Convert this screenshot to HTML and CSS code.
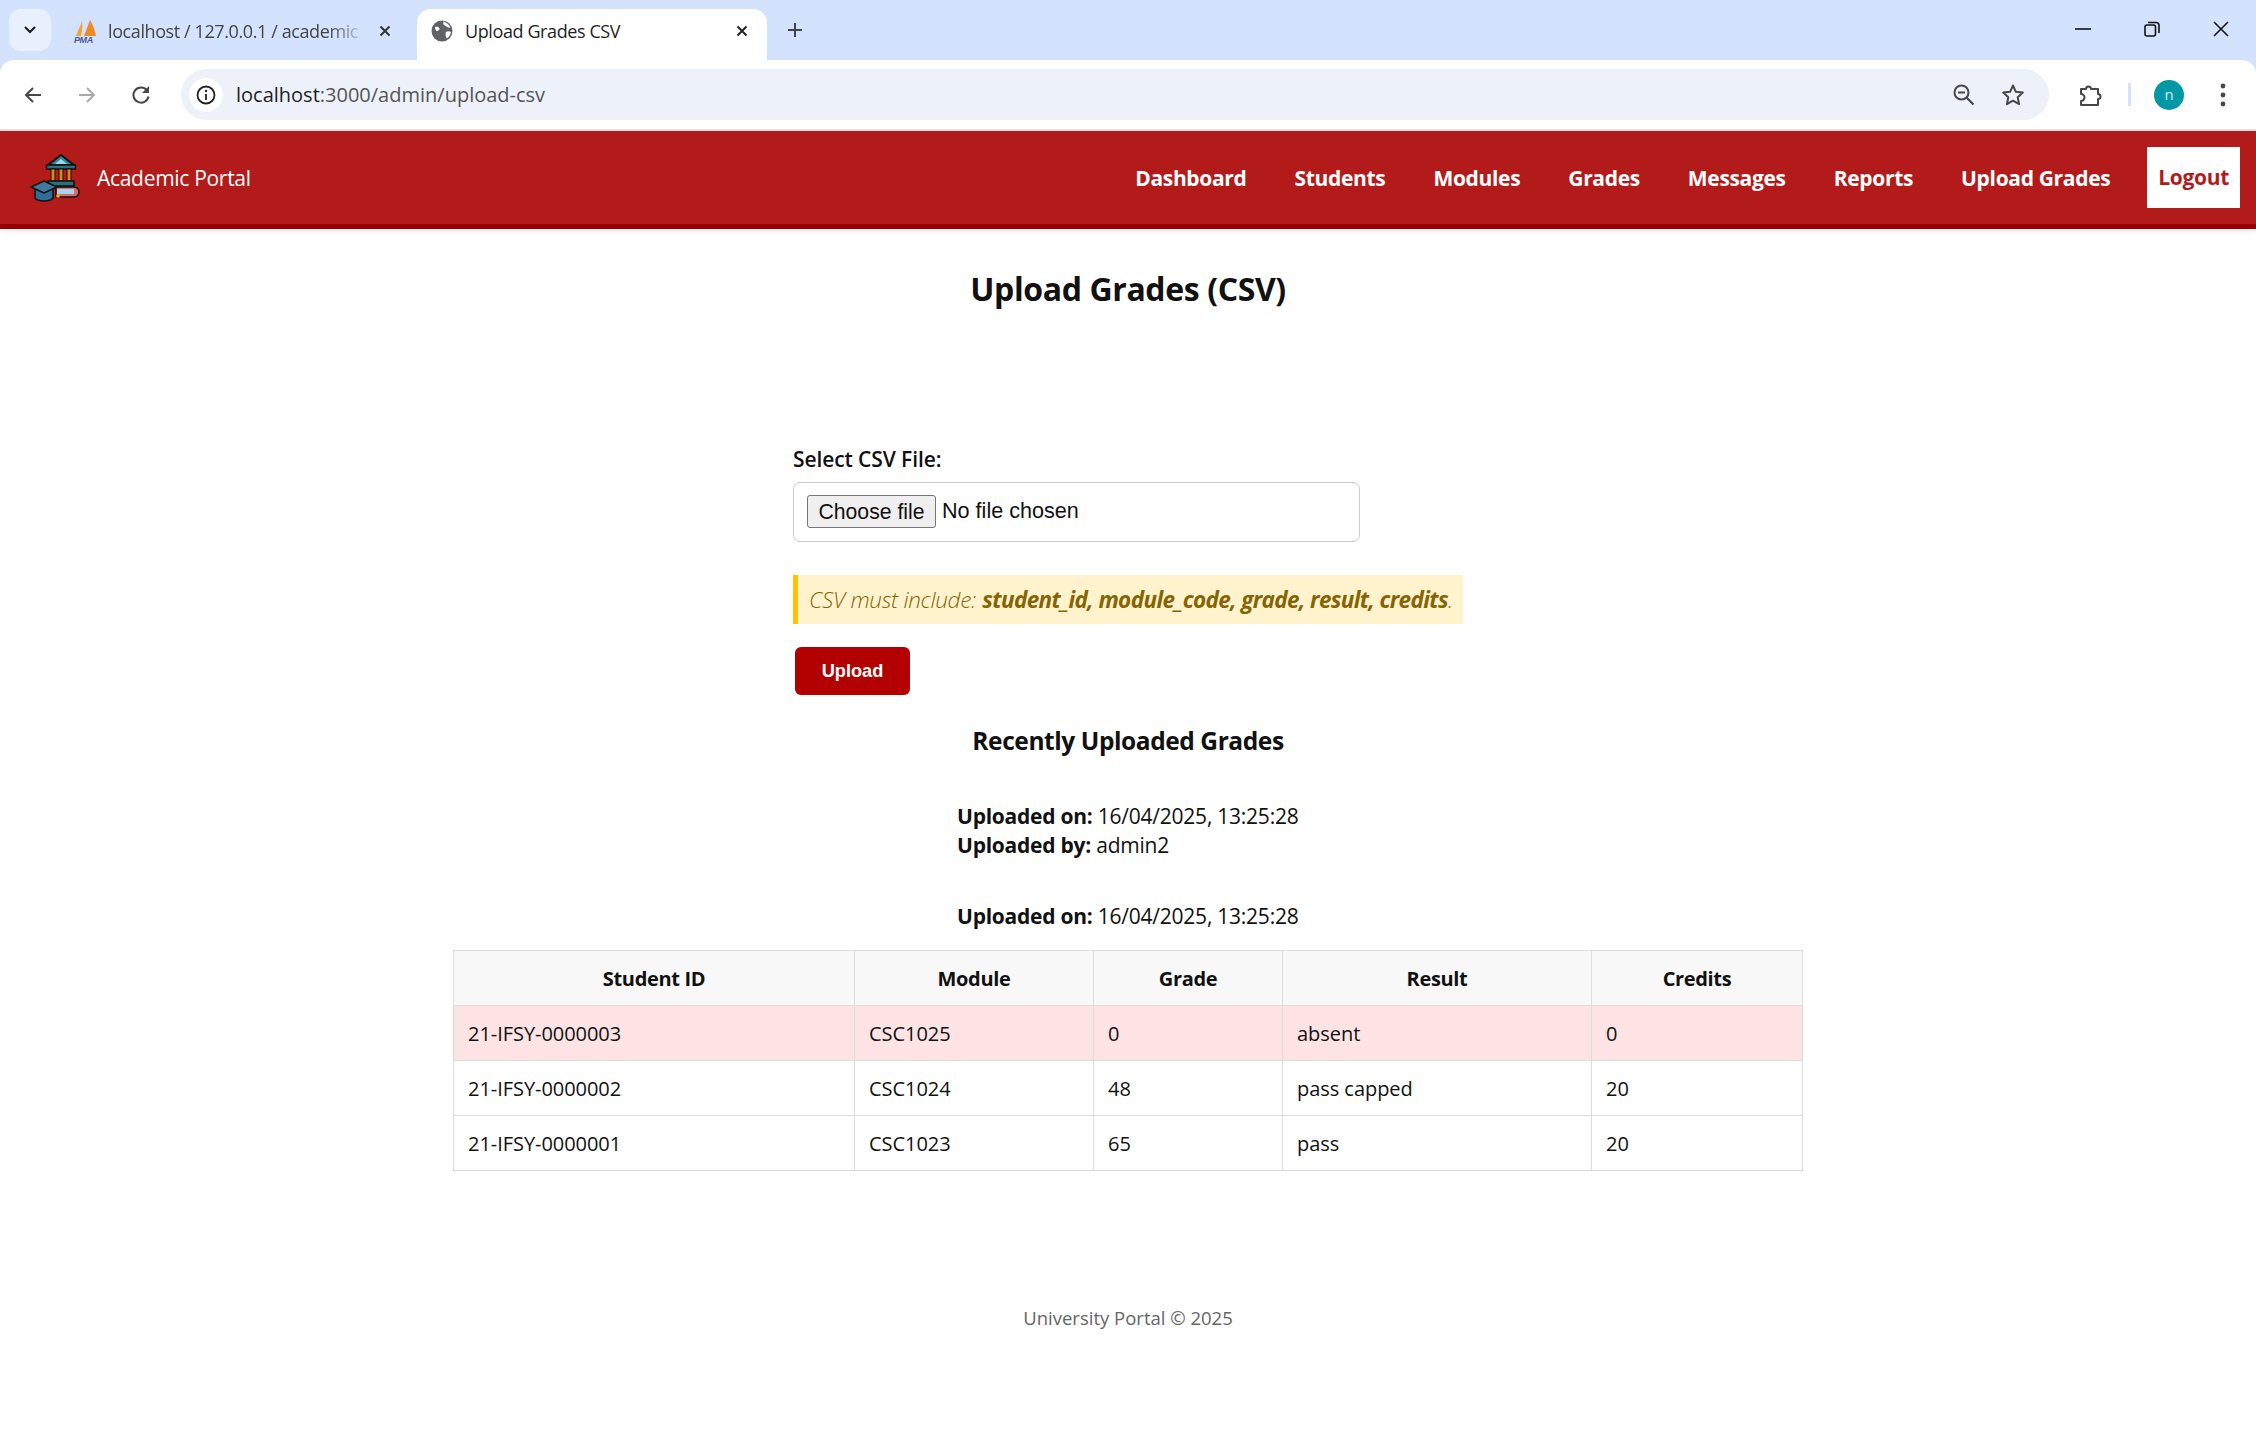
FILE: index.html
```html
<!DOCTYPE html>
<html>

<head>
    <meta charset="utf-8">
    <title>Upload Grades CSV</title>
    <link rel="stylesheet" href="styles.css">
</head>

<body>

    <div class="browser">
        <div class="tabstrip">
            <div class="tab-search">
                <svg width="14" height="10" viewBox="0 0 14 10"><path d="M2 2l5 5 5-5" fill="none" stroke="#1f1f1f" stroke-width="2.2"/></svg>
            </div>
            <div class="tab">
                <svg class="favicon" width="26" height="26" viewBox="0 0 26 26">
                    <path d="M3 18C5 12 8 7 9 3c1 5 0 10-1 15z" fill="#f6a13a"/>
                    <path d="M11 18c2-5 4-11 6-16 2 3 5 10 6 16z" fill="#f08a24"/>
                    <text x="1" y="25" class="pma">PMA</text>
                </svg>
                <span class="tab-title faded">localhost / 127.0.0.1 / academic</span>
                <svg class="tab-close" width="12" height="12" viewBox="0 0 12 12"><path d="M1.5 1.5l9 9M10.500 1.500l-9 9" stroke="#333" stroke-width="2"/></svg>
            </div>
            <div class="tab active">
                <svg class="globe" width="22" height="22" viewBox="0 0 22 22">
                    <circle cx="11" cy="11" r="10.500" fill="#5f6368"/>
                    <path d="M12 1.500c3 .5 6 3 7.500 6-2 .5-3 0-4-1s-2.500-1-3-2 .5-2-.5-3zM15 12c1.500-1 3.500-1 5 0-.5 3-2 5-4 6.500-1.500-2-2-4.500-1-6.500zM4 7c2-.5 4 0 4.500 1.500S7 11 6 11 4 9 4 7z" fill="#fff"/>
                </svg>
                <span class="tab-title">Upload Grades CSV</span>
                <svg class="tab-close" width="12" height="12" viewBox="0 0 12 12"><path d="M1.500 1.500l9 9M10.500 1.500l-9 9" stroke="#222" stroke-width="2"/></svg>
            </div>
            <svg class="new-tab" width="16" height="16" viewBox="0 0 16 16"><path d="M8 1v14M1 8h14" stroke="#444" stroke-width="2"/></svg>
            <div class="window-btns">
                <svg width="16" height="16" viewBox="0 0 16 16"><path d="M0 8h16" stroke="#111" stroke-width="1.600"/></svg>
                <svg width="16" height="16" viewBox="0 0 16 16"><rect x="1" y="4" width="10.500" height="11" rx="2" fill="none" stroke="#111" stroke-width="1.600"/><path d="M4 1.500h8a3 3 0 0 1 3 3V12" fill="none" stroke="#111" stroke-width="1.600"/></svg>
                <svg width="16" height="16" viewBox="0 0 16 16"><path d="M1 1l14 14M15 1L1 15" stroke="#111" stroke-width="1.600"/></svg>
            </div>
        </div>
        <div class="toolbar">
            <svg class="tool-btn" width="20" height="20" viewBox="0 0 20 20"><path d="M18 10H3M10 3l-7 7 7 7" fill="none" stroke="#474747" stroke-width="2"/></svg>
            <svg class="tool-btn" width="20" height="20" viewBox="0 0 20 20"><path d="M2 10h15M10 3l7 7-7 7" fill="none" stroke="#aaa" stroke-width="2"/></svg>
            <svg class="tool-btn" width="20" height="20" viewBox="0 0 20 20"><path d="M17.500 11.500a7.600 7.600 0 1 1-1.500-6.200" fill="none" stroke="#474747" stroke-width="2"/><path d="M18 1v7h-7z" fill="#474747"/></svg>
            <div class="omnibox">
                <div class="site-info">
                    <svg width="20" height="20" viewBox="0 0 20 20"><circle cx="10" cy="10" r="8.500" fill="none" stroke="#222" stroke-width="1.800"/><path d="M10 9v6" stroke="#222" stroke-width="1.800"/><circle cx="10" cy="6" r="1.200" fill="#222"/></svg>
                </div>
                <span class="url"><span class="url-host">localhost</span>:3000/admin/upload-csv</span>
                <svg class="omni-icon" width="22" height="22" viewBox="0 0 22 22"><circle cx="8.500" cy="8.500" r="7" fill="none" stroke="#474747" stroke-width="2"/><path d="M5 8.500h7" stroke="#474747" stroke-width="2"/><path d="M13.500 13.500l7 7" stroke="#474747" stroke-width="2.200"/></svg>
                <svg class="omni-icon" width="24" height="24" viewBox="0 0 24 24"><path d="M12 2.500l2.900 6.300 6.900.8-5.100 4.700 1.400 6.800-6.100-3.400-6.100 3.400 1.400-6.800-5.100-4.700 6.900-.8z" fill="none" stroke="#474747" stroke-width="2" stroke-linejoin="round"/></svg>
            </div>
            <svg class="ext-icon" width="24" height="24" viewBox="0 0 24 24"><path d="M2 6h5a2.500 2.500 0 0 1 5 0h7v5a2.500 2.500 0 0 1 0 5v6H2v-4a3 3 0 0 0 0-7z" fill="none" stroke="#474747" stroke-width="2" stroke-linejoin="round"/></svg>
            <div class="tool-sep"></div>
            <div class="avatar">n</div>
            <svg class="menu-dots" width="6" height="24" viewBox="0 0 6 24"><circle cx="3" cy="3" r="2.400" fill="#474747"/><circle cx="3" cy="12" r="2.400" fill="#474747"/><circle cx="3" cy="21" r="2.400" fill="#474747"/></svg>
        </div>
    </div>

    <nav class="navbar">
        <div class="brand">
            <svg class="brand-logo" width="50" height="48" viewBox="0 0 50 48">
                <path d="M31 1L18 11h26z" fill="#2d8a99" stroke="#111" stroke-width="2" stroke-linejoin="round"/>
                <path d="M31 5l-6 5h12z" fill="#9ed2ee"/>
                <rect x="16.500" y="11" width="29" height="4" fill="#27727f" stroke="#111" stroke-width="1.500"/>
                <rect x="21" y="15" width="4" height="12" fill="#d9861e" stroke="#111"/>
                <rect x="29" y="15" width="4" height="12" fill="#d9861e" stroke="#111"/>
                <rect x="37" y="15" width="4" height="12" fill="#d9861e" stroke="#111"/>
                <rect x="18" y="27" width="26" height="5" fill="#27727f" stroke="#111" stroke-width="1.500"/>
                <path d="M26 33h18a5 5 0 0 1 0 10H26z" fill="#e06a6a" stroke="#111" stroke-width="1.500"/>
                <rect x="27" y="35" width="17" height="5" fill="#a6d3ee"/>
                <path d="M5 34v10c3 4 15 4 18 0V34z" fill="#2f6f96" stroke="#111" stroke-width="1.500"/>
                <path d="M1 33l13-6 13 6-13 6z" fill="#3f7a9c" stroke="#111" stroke-width="1.500" stroke-linejoin="round"/>
                <circle cx="28" cy="42" r="1.800" fill="#f0b429"/>
            </svg>
            <span class="brand-name">Academic Portal</span>
        </div>
        <div class="nav-links">
            <a class="nav-link">Dashboard</a>
            <a class="nav-link">Students</a>
            <a class="nav-link">Modules</a>
            <a class="nav-link">Grades</a>
            <a class="nav-link">Messages</a>
            <a class="nav-link">Reports</a>
            <a class="nav-link">Upload Grades</a>
            <a class="nav-link logout">Logout</a>
        </div>
    </nav>

    <main class="content">
        <h1 class="page-title">Upload Grades (CSV)</h1>

        <form class="upload-form">
            <label class="file-label">Select CSV File:</label>
            <div class="file-box">
                <button class="file-btn" type="button">Choose file</button>
                <span class="file-name">No file chosen</span>
            </div>
            <p class="csv-note">CSV must include: <strong>student_id, module_code, grade, result, credits</strong>.</p>
            <button class="upload-btn" type="button">Upload</button>
        </form>

        <h2 class="recent-title">Recently Uploaded Grades</h2>

        <div class="upload-meta">
            <p><strong>Uploaded on:</strong> 16/04/2025, 13:25:28<br><strong>Uploaded by:</strong> admin2</p>
        </div>
        <div class="upload-meta second">
            <p><strong>Uploaded on:</strong> 16/04/2025, 13:25:28</p>
        </div>

        <table class="grades">
            <thead>
                <tr>
                    <th class="col-id">Student ID</th>
                    <th class="col-module">Module</th>
                    <th class="col-grade">Grade</th>
                    <th class="col-result">Result</th>
                    <th class="col-credits">Credits</th>
                </tr>
            </thead>
            <tbody>
                <tr class="row-absent">
                    <td>21-IFSY-0000003</td>
                    <td>CSC1025</td>
                    <td>0</td>
                    <td>absent</td>
                    <td>0</td>
                </tr>
                <tr>
                    <td>21-IFSY-0000002</td>
                    <td>CSC1024</td>
                    <td>48</td>
                    <td>pass capped</td>
                    <td>20</td>
                </tr>
                <tr>
                    <td>21-IFSY-0000001</td>
                    <td>CSC1023</td>
                    <td>65</td>
                    <td>pass</td>
                    <td>20</td>
                </tr>
            </tbody>
        </table>
    </main>

    <footer class="footer">University Portal © 2025</footer>

</body>

</html>
```

FILE: styles.css
```css
body {
    font-family: "Open Sans", "Noto Sans", sans-serif;
    margin: 0;
    background-color: white;
    color: #111;
}

/* browser chrome */
.browser {
    height: 131px;
    background-color: #d3e3fd;
}

.tabstrip {
    height: 60px;
    display: flex;
    align-items: flex-end;
    position: relative;
}

.tab-search {
    width: 42px;
    height: 42px;
    margin: 0 4px 9px 9px;
    border-radius: 12px;
    background-color: #e9f0fd;
    display: flex;
    align-items: center;
    justify-content: center;
}

.tab {
    width: 362px;
    height: 51px;
    padding: 0 26px 7px 18px;
    box-sizing: border-box;
    display: flex;
    align-items: center;
    font-size: 18px;
    letter-spacing: -0.4px;
    color: #444;
}

.tab.active {
    width: 350px;
    padding: 0 19px 7px 14px;
    background-color: white;
    border-radius: 14px 14px 0 0;
    color: #1f1f1f;
}

.favicon {
    flex: none;
    margin-right: 9px;
}

.pma {
    font-family: "Liberation Sans", sans-serif;
    font-size: 9px;
    font-style: italic;
    font-weight: bold;
    fill: #4a5a8a;
}

.globe {
    flex: none;
    margin-right: 12px;
}

.tab-title {
    flex: 1;
    white-space: nowrap;
    overflow: hidden;
}

.faded {
    -webkit-mask-image: linear-gradient(to right, black 85%, transparent);
    mask-image: linear-gradient(to right, black 85%, transparent);
}

.tab-close {
    flex: none;
    margin-left: 12px;
}

.new-tab {
    margin: 0 0 22px 20px;
}

.window-btns {
    margin: 0 27px 23px auto;
    display: flex;
    gap: 53px;
}

.toolbar {
    height: 69px;
    background-color: white;
    border-bottom: 2px solid #dfe1e0;
    border-radius: 14px 14px 0 0;
    display: flex;
    align-items: center;
    padding-left: 23px;
}

.tool-btn {
    margin-right: 34px;
    flex: none;
}

.omnibox {
    width: 1868px;
    height: 51px;
    margin-left: -4px;
    flex: none;
    background-color: #ecf1fa;
    border-radius: 26px;
    display: flex;
    align-items: center;
    padding-left: 8px;
    box-sizing: border-box;
}

.site-info {
    width: 34px;
    height: 34px;
    border-radius: 50%;
    background-color: white;
    display: flex;
    align-items: center;
    justify-content: center;
    flex: none;
}

.url {
    margin-left: 13px;
    flex: 1;
    font-size: 20px;
    color: #555;
}

.url-host {
    color: #1f1f1f;
}

.omni-icon {
    flex: none;
    margin-right: 26px;
}

.omni-icon + .omni-icon {
    margin-right: 24px;
}

.ext-icon {
    flex: none;
    margin-left: 30px;
}

.tool-sep {
    width: 3px;
    height: 23px;
    margin-left: 25px;
    background-color: #d3e3fd;
    flex: none;
}

.avatar {
    width: 30px;
    height: 30px;
    margin-left: 23px;
    border-radius: 50%;
    background-color: #0097a7;
    color: #cfeef2;
    font-size: 15px;
    line-height: 29px;
    text-align: center;
    flex: none;
}

.menu-dots {
    margin-left: 36px;
    flex: none;
}

/* site nav */
.navbar {
    height: 93px;
    background-color: #b31b1b;
    border-bottom: 5px solid #990000;
    box-shadow: 0 3px 6px rgba(0, 0, 0, 0.06);
    display: flex;
    align-items: center;
    justify-content: space-between;
    padding: 0 16px 0 30px;
}

.brand {
    display: flex;
    align-items: center;
}

.brand-logo {
    margin-right: 17px;
}

.brand-name {
    font-size: 21px;
    letter-spacing: -0.3px;
    color: white;
}

.nav-links {
    display: flex;
    align-items: center;
}

.nav-link {
    margin-right: 48px;
    font-size: 21px;
    font-weight: bold;
    letter-spacing: -0.33px;
    color: white;
}

.nav-link.logout {
    margin: 0 0 0 -11px;
    height: 61px;
    line-height: 61px;
    padding: 0 11px;
    background-color: white;
    color: #b31b1b;
}

/* page */
.content {
    display: flex;
    flex-direction: column;
    align-items: center;
}

.page-title {
    margin: 38px 0 0;
    font-size: 32px;
    line-height: 43px;
    letter-spacing: -0.38px;
}

.upload-form {
    width: 670px;
    margin-top: 135px;
}

.file-label {
    display: block;
    font-size: 21px;
    line-height: 29px;
    font-weight: 600;
    letter-spacing: -0.1px;
}

.file-box {
    width: 567px;
    height: 60px;
    margin-top: 8px;
    box-sizing: border-box;
    border: 1px solid #ccc;
    border-radius: 7px;
    padding: 12px 13px;
    display: flex;
    align-items: flex-start;
    font-family: "Liberation Sans", sans-serif;
    font-size: 21.600px;
}

.file-btn {
    width: 129px;
    height: 33px;
    padding: 0;
    box-sizing: border-box;
    background-color: #efefef;
    border: 1px solid #767676;
    border-radius: 3px;
    color: #111;
    font-family: inherit;
    font-size: 21.200px;
}

.file-name {
    margin-left: 6px;
    line-height: 31px;
}

.csv-note {
    margin: 33px 0 0;
    height: 49px;
    box-sizing: border-box;
    padding-left: 11px;
    background-color: #fff3cd;
    border-left: 5px solid #ffc107;
    font-size: 22.500px;
    line-height: 50px;
    font-style: italic;
    font-weight: 300;
    letter-spacing: -0.3px;
    color: #856404;
    white-space: nowrap;
}

.csv-note strong {
    margin-left: 1px;
    font-weight: 700;
    letter-spacing: -0.62px;
}

.upload-btn {
    display: block;
    margin: 23px 0 0 2px;
    width: 115px;
    height: 48px;
    padding: 0;
    border: none;
    border-radius: 6px;
    background-color: #b30000;
    color: white;
    font-family: "Liberation Sans", sans-serif;
    font-size: 18.200px;
    font-weight: bold;
}

.recent-title {
    margin: 28px 0 0;
    font-size: 24.500px;
    line-height: 36px;
    letter-spacing: -0.42px;
}

.upload-meta {
    margin-top: 43px;
    width: 342px;
    font-size: 21px;
    line-height: 29px;
    letter-spacing: -0.24px;
}

.upload-meta p {
    margin: 0;
    white-space: nowrap;
}

.upload-meta.second {
    margin-top: 42px;
}

.grades {
    width: 1349px;
    margin-top: 19px;
    border-collapse: collapse;
    table-layout: fixed;
    font-size: 20px;
    letter-spacing: -0.05px;
}

.grades th,
.grades td {
    height: 55px;
    padding: 0 14px;
    box-sizing: border-box;
    border: 1px solid #ddd;
    text-align: left;
}

.grades th {
    padding-top: 1px;
    background-color: #f8f8f8;
    text-align: center;
    font-weight: bold;
    letter-spacing: -0.35px;
}

.col-id { width: 401px; }
.col-module { width: 239px; }
.col-grade { width: 189px; }
.col-result { width: 309px; }
.col-credits { width: 211px; }

.row-absent td {
    background-color: #fde3e3;
}

.footer {
    margin-top: 134px;
    text-align: center;
    font-size: 18.500px;
    line-height: 26px;
    color: #666;
}
```
